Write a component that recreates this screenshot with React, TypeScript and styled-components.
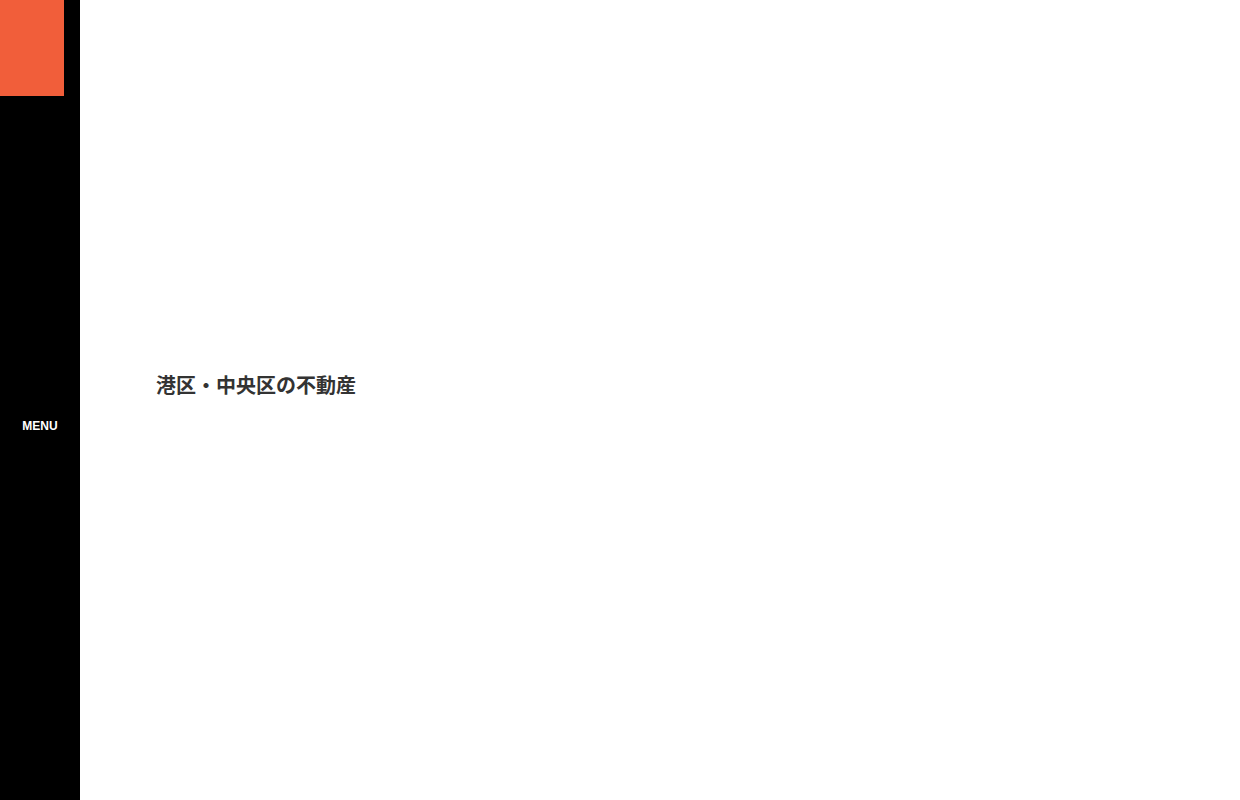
import React from "react";
import styled, { createGlobalStyle } from "styled-components";

const Global = createGlobalStyle`
  html, body { margin: 0; padding: 0; background: #fff; }
  body { font-family: "Liberation Sans", Arial, "Noto Sans CJK JP", sans-serif; }
`;

const Page = styled.div`
  display: flex;
  width: 100%;
  height: 800px;
`;

const Sidebar = styled.nav`
  width: 80px;
  flex: 0 0 80px;
  background: #000;
  display: flex;
  flex-direction: column;
`;

const Logo = styled.div`
  width: 64px;
  height: 96px;
  background: #f15e3a;
`;

const MenuButton = styled.button`
  margin-top: 323px;
  background: none;
  border: 0;
  padding: 0;
  color: #fff;
  font-family: "Liberation Sans", Arial, sans-serif;
  font-weight: 700;
  font-size: 12px;
  line-height: 14px;
  text-align: center;
  width: 80px;
  cursor: pointer;
`;

const Main = styled.main`
  flex: 1;
  display: flex;
  flex-direction: column;
  justify-content: center;
  padding: 0 0 28px 76px;
`;

const Title = styled.h1`
  margin: 0;
  font-family: "Liberation Sans", Arial, "Noto Sans CJK JP", sans-serif;
  font-size: 20px;
  line-height: 30px;
  font-weight: 700;
  color: #333;
`;

export default function App() {
  return (
    <>
      <Global />
      <Page>
        <Sidebar>
          <Logo />
          <MenuButton>MENU</MenuButton>
        </Sidebar>
        <Main>
          <Title>港区・中央区の不動産</Title>
        </Main>
      </Page>
    </>
  );
}
